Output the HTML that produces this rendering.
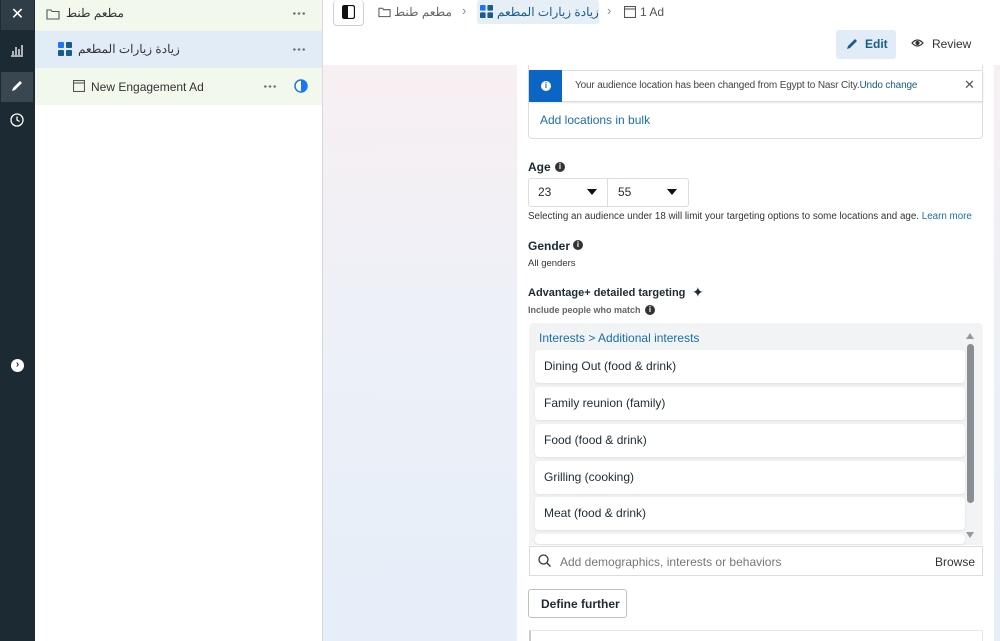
<!DOCTYPE html>
<html><head><meta charset="utf-8"><style>
*{box-sizing:border-box;margin:0;padding:0}
body{width:1000px;height:641px;overflow:hidden;font-family:"Liberation Sans","Noto Sans CJK SC",sans-serif;color:#1c2b33;position:relative;background:#fff}
.abs{position:absolute}
.side{left:0;top:0;width:35px;height:641px;background:#1c2b33}
.nav{left:35px;top:0;width:288px;height:641px;background:#fff;border-right:1px solid #d5d9dc}
.row{position:absolute;left:0;width:287px;height:36px;font-size:12px;display:flex;align-items:center}
.dots{position:absolute;width:14px;height:3px;background:radial-gradient(circle,#777 1.2px,transparent 1.4px) 0 0/4.7px 3px repeat-x}
.main{left:323px;top:65px;width:677px;height:576px;background:linear-gradient(180deg,#f8eff2 0%,#eef0f7 40%,#e5eef9 100%)}
.panel{left:517px;top:65px;width:477px;height:576px;background:#fff}
.t{position:absolute;white-space:nowrap}
.item{position:absolute;left:535px;width:430px;height:33px;background:#fff;border-radius:4px;box-shadow:0 1px 2px rgba(0,0,0,.08);font-size:12px;padding:9px 0 0 9px}
.ic{position:absolute;width:10px;height:10px;border-radius:50%;background:#333;color:#fff;font-size:8px;font-weight:bold;text-align:center;line-height:10px}
</style></head><body>
<div class="abs side">
 <div class="abs" style="left:1px;top:0;width:33px;height:30px;background:#2f3d46;color:#fff;font-size:16px;text-align:center;line-height:30px">✕</div>
 <svg class="abs" style="left:10px;top:43px" width="14" height="14" viewBox="0 0 14 14" fill="none" stroke="#fff" stroke-width="1.3"><path d="M1 13H13M3 12V8M6 12V4M9 12V6M12 12V2"/></svg>
 <div class="abs" style="left:1px;top:72px;width:32px;height:30px;background:#3a4750"></div>
 <svg class="abs" style="left:10px;top:79px" width="14" height="14" viewBox="0 0 14 14"><path d="M2 12L3 9L10 2L12 4L5 11Z" fill="#fff"/></svg>
 <svg class="abs" style="left:10px;top:113px" width="14" height="14" viewBox="0 0 14 14" fill="none" stroke="#fff" stroke-width="1.3"><circle cx="7" cy="7" r="6"/><path d="M7 3.5V7L9.5 8.5"/></svg>
 <div class="abs" style="left:11px;top:359px;width:13px;height:13px;border-radius:50%;background:#fff;color:#1c2b33;font-size:10px;line-height:12px;text-align:center;font-weight:bold">›</div>
</div>
<div class="abs nav">
 <div class="row" style="top:-4px;background:#f3f8ec;height:35px">
  <svg class="abs" style="left:11px;top:12px" width="14" height="12" viewBox="0 0 14 12" fill="none" stroke="#555" stroke-width="1.1"><path d="M1 2H5L6 3.5H13V11H1Z"/></svg>
  <span class="t" style="left:31px;top:10px;color:#333">مطعم طنط</span>
  <span class="dots" style="left:257px;top:16px"></span>
 </div>
 <div class="row" style="top:31px;background:#e2ecf6;height:37px">
  <svg class="abs" style="left:23px;top:11px" width="14" height="14" viewBox="0 0 14 14"><rect x="0" y="0" width="6" height="6" rx="1" fill="#1877f2"/><rect x="8" y="0" width="6" height="6" rx="1" fill="#1a5c8a"/><rect x="0" y="8" width="6" height="6" rx="1" fill="#1a5c8a"/><rect x="8" y="8" width="6" height="6" rx="1" fill="#1a5c8a"/></svg>
  <span class="t" style="left:43px;top:11px;color:#333">زيادة زيارات المطعم</span>
  <span class="dots" style="left:257px;top:17px"></span>
 </div>
 <div class="row" style="top:68px;background:#f3f8ec;height:37px">
  <svg class="abs" style="left:38px;top:12px" width="12" height="12" viewBox="0 0 12 12" fill="none" stroke="#555" stroke-width="1.1"><rect x="0.5" y="0.5" width="11" height="11"/><path d="M0.5 3H11.5"/></svg>
  <span class="t" style="left:56px;top:12px;color:#333">New Engagement Ad</span>
  <span class="dots" style="left:228px;top:17px"></span>
  <svg class="abs" style="left:259px;top:11px" width="14" height="14" viewBox="0 0 14 14"><circle cx="7" cy="7" r="6" fill="#fff" stroke="#1877f2" stroke-width="1.5"/><path d="M7 1A6 6 0 0 1 7 13Z" fill="#1877f2"/></svg>
 </div>
</div>
<div class="abs" style="left:323px;top:0;width:677px;height:65px;background:#fff"></div>
<div class="abs" style="left:333px;top:0;width:31px;height:26px;border:1px solid #ccd0d5;border-radius:4px;border-top:none"></div>
<svg class="abs" style="left:342px;top:5px" width="13" height="14" viewBox="0 0 13 14"><rect x="0.5" y="0.5" width="12" height="13" rx="2" fill="none" stroke="#111" stroke-width="1.3"/><rect x="1" y="1" width="5" height="12" fill="#111"/></svg>
<svg class="abs" style="left:378px;top:6px" width="13" height="12" viewBox="0 0 14 12" fill="none" stroke="#555" stroke-width="1.1"><path d="M1 2H5L6 3.5H13V11H1Z"/></svg>
<span class="t" style="left:394px;top:5px;font-size:12px;color:#666">مطعم طنط</span>
<span class="t" style="left:462px;top:3px;font-size:13px;color:#888">›</span>
<div class="abs" style="left:477px;top:0;width:122px;height:24px;background:#e6eef6;border-radius:3px"></div>
<svg class="abs" style="left:480px;top:5px" width="13" height="13" viewBox="0 0 14 14"><rect x="0" y="0" width="6" height="6" rx="1" fill="#1877f2"/><rect x="8" y="0" width="6" height="6" rx="1" fill="#1a5c8a"/><rect x="0" y="8" width="6" height="6" rx="1" fill="#1a5c8a"/><rect x="8" y="8" width="6" height="6" rx="1" fill="#1a5c8a"/></svg>
<span class="t" style="left:497px;top:5px;font-size:12px;color:#1a5c8a">زيادة زيارات المطعم</span>
<span class="t" style="left:607px;top:3px;font-size:13px;color:#888">›</span>
<svg class="abs" style="left:624px;top:6px" width="12" height="12" viewBox="0 0 12 12" fill="none" stroke="#555" stroke-width="1.1"><rect x="0.5" y="0.5" width="11" height="11"/><path d="M0.5 3H11.5"/></svg>
<span class="t" style="left:640px;top:5px;font-size:12px;color:#555">1 Ad</span>
<div class="abs" style="left:836px;top:30px;width:60px;height:29px;background:#e2ecf6;border-radius:3px"></div>
<svg class="abs" style="left:845px;top:37px" width="14" height="14" viewBox="0 0 14 14"><path d="M2 12L3 9L10 2L12 4L5 11Z" fill="#1a5c8a"/></svg>
<span class="t" style="left:865px;top:37px;font-size:12px;font-weight:bold;color:#1a5c8a">Edit</span>
<svg class="abs" style="left:911px;top:38px" width="13" height="10" viewBox="0 0 13 10" fill="none" stroke="#333" stroke-width="1.2"><path d="M1 5Q6.5 -1 12 5Q6.5 11 1 5Z"/><circle cx="6.5" cy="5" r="1.5" fill="#333"/></svg>
<span class="t" style="left:932px;top:37px;font-size:12px;color:#333">Review</span>
<div class="abs main"></div>
<div class="abs panel"></div>
<div class="abs" style="left:528px;top:65px;width:455px;height:74px;border:1px solid #dadde1;border-top:none;border-radius:0 0 4px 4px"></div>
<div class="abs" style="left:529px;top:70px;width:454px;height:32px;border:1px solid #dadde1;background:#fff;box-shadow:0 1px 2px rgba(0,0,0,.1)"></div>
<div class="abs" style="left:529px;top:70px;width:33px;height:32px;background:#0a66c2"></div>
<div class="abs" style="left:541px;top:81px;width:10px;height:10px;border-radius:50%;background:#fff;color:#0a66c2;font-size:8px;font-weight:bold;text-align:center;line-height:10px">i</div>
<span class="t" style="left:575px;top:80px;font-size:10px;color:#444;letter-spacing:-0.15px">Your audience location has been changed from Egypt to Nasr City.<span style="color:#1a5c8a">Undo change</span></span>
<span class="t" style="left:964px;top:77px;font-size:13px;color:#555">✕</span>
<span class="t" style="left:540px;top:113px;font-size:12px;color:#1a6fa8">Add locations in bulk</span>
<span class="t" style="left:528px;top:160px;font-size:12px;font-weight:bold">Age</span>
<div class="ic" style="left:555px;top:162px">i</div>
<div class="abs" style="left:528px;top:178px;width:161px;height:29px;border:1px solid #dadde1;border-radius:3px"></div>
<div class="abs" style="left:607px;top:178px;width:1px;height:29px;background:#dadde1"></div>
<span class="t" style="left:538px;top:185px;font-size:12px">23</span>
<span class="t" style="left:618px;top:185px;font-size:12px">55</span>
<svg class="abs" style="left:587px;top:189px" width="10" height="6"><path d="M0 0H10L5 6Z" fill="#111"/></svg>
<svg class="abs" style="left:667px;top:189px" width="10" height="6"><path d="M0 0H10L5 6Z" fill="#111"/></svg>
<span class="t" style="left:528px;top:211px;font-size:9.8px;color:#333">Selecting an audience under 18 will limit your targeting options to some locations and age. <span style="color:#1a6fa8">Learn more</span></span>
<span class="t" style="left:528px;top:239px;font-size:12px;font-weight:bold">Gender</span>
<div class="ic" style="left:573px;top:240px">i</div>
<span class="t" style="left:528px;top:258px;font-size:9.5px;color:#333">All genders</span>
<span class="t" style="left:528px;top:287px;font-size:11px;font-weight:bold">Advantage+ detailed targeting</span>
<span class="t" style="left:692px;top:284px;font-size:14px">✦</span>
<span class="t" style="left:528px;top:305px;font-size:9px;color:#666;font-weight:bold">Include people who match</span>
<div class="ic" style="left:645px;top:305px">i</div>
<div class="abs" style="left:529px;top:323px;width:454px;height:222px;background:#f2f3f4;border-radius:5px 5px 0 0"></div>
<span class="t" style="left:539px;top:331px;font-size:12px;color:#1a6fa8">Interests &gt; Additional interests</span>
<div class="item" style="top:350px">Dining Out (food &amp; drink)</div>
<div class="item" style="top:387px">Family reunion (family)</div>
<div class="item" style="top:424px">Food (food &amp; drink)</div>
<div class="item" style="top:461px">Grilling (cooking)</div>
<div class="item" style="top:497px">Meat (food &amp; drink)</div>
<div class="item" style="top:534px;height:10px;padding:0"></div>
<svg class="abs" style="left:966px;top:333px" width="8" height="6"><path d="M0 6H8L4 0Z" fill="#999"/></svg>
<div class="abs" style="left:967px;top:344px;width:7px;height:159px;background:#8a8d91;border-radius:4px"></div>
<svg class="abs" style="left:966px;top:532px" width="8" height="6"><path d="M0 0H8L4 6Z" fill="#999"/></svg>
<div class="abs" style="left:529px;top:546px;width:454px;height:30px;border:1px solid #dadde1;background:#fff"></div>
<svg class="abs" style="left:538px;top:554px" width="13" height="14" fill="none" stroke="#333" stroke-width="1.3"><circle cx="5.5" cy="5.5" r="4.5"/><path d="M9 9L12.5 12.5"/></svg>
<span class="t" style="left:560px;top:555px;font-size:12px;color:#777">Add demographics, interests or behaviors</span>
<span class="t" style="left:935px;top:555px;font-size:12px;color:#333">Browse</span>
<div class="abs" style="left:528px;top:589px;width:99px;height:29px;border:1px solid #bcc0c4;border-radius:3px;font-size:12px;font-weight:bold;padding:7px 0 0 12px">Define further</div>
<div class="abs" style="left:529px;top:630px;width:454px;height:11px;border:1px solid #e4e6eb;border-left:2px solid #ccc;border-bottom:none"></div>
</body></html>
